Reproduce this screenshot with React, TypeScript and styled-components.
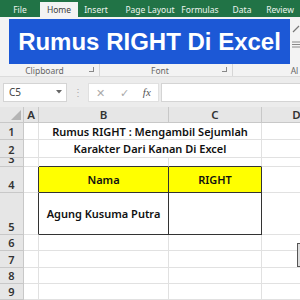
import React from "react";
import styled, { createGlobalStyle } from "styled-components";

const Global = createGlobalStyle`
  html, body { margin: 0; padding: 0; background: #fff; }
  body { width: 300px; height: 300px; overflow: hidden; font-family: "Noto Sans", "Open Sans", sans-serif; }
`;

const Page = styled.div`
  width: 300px;
  height: 300px;
  display: flex;
  flex-direction: column;
  overflow: hidden;
`;

const TabBar = styled.div`
  height: 17px;
  background: #217346;
  display: flex;
  align-items: flex-end;
  flex-shrink: 0;
`;

const Tab = styled.div<{ $active?: boolean; $w: number }>`
  width: ${(p) => p.$w}px;
  height: 15px;
  display: flex;
  align-items: center;
  justify-content: center;
  font-size: 8.5px;
  color: ${(p) => (p.$active ? "#3b3b3b" : "#eef5f0")};
  background: ${(p) => (p.$active ? "#f3f3f3" : "transparent")};
  white-space: nowrap;
  flex-shrink: 0;
`;

const Ribbon = styled.div`
  height: 59px;
  background: #f3f3f3;
  border-bottom: 1px solid #dcdcdc;
  display: flex;
  flex-direction: column;
  flex-shrink: 0;
`;

const RibbonBody = styled.div`
  height: 47px;
  display: flex;
  align-items: flex-start;
  padding: 2px 0 0 9px;
  box-sizing: border-box;
`;

const Banner = styled.div`
  width: 281px;
  height: 45px;
  background: #1c58d6;
  display: flex;
  align-items: center;
  justify-content: center;
  color: #fff;
  font-family: "Liberation Sans", Arial, sans-serif;
  font-weight: 700;
  font-size: 24px;
  flex-shrink: 0;
`;

const SideIcons = styled.div`
  display: flex;
  flex-direction: column;
  gap: 8px;
  padding: 6px 0 0 2px;
`;

const GroupRow = styled.div`
  height: 12px;
  display: flex;
  font-size: 8.5px;
  color: #666;
`;

const Group = styled.div<{ $w: number; $sep?: boolean }>`
  width: ${(p) => p.$w}px;
  position: relative;
  display: flex;
  align-items: center;
  justify-content: center;
  flex-shrink: 0;
  border-right: ${(p) => (p.$sep ? "1px solid #d6d6d6" : "none")};
  box-sizing: border-box;
`;

const GroupLabel = styled.span<{ $shift: number }>`
  transform: translateX(${(p) => p.$shift}px);
  white-space: nowrap;
`;

const Launcher = styled.span`
  position: absolute;
  right: 5px;
  top: 3px;
  width: 5px;
  height: 5px;
  border: 1px solid #888;
  border-top: none;
  border-left: none;
  box-sizing: border-box;
`;

const FormulaArea = styled.div`
  height: 30px;
  background: #ececec;
  display: flex;
  align-items: center;
  padding: 0 0 0 3px;
  flex-shrink: 0;
`;

const NameBox = styled.div`
  width: 64px;
  height: 19px;
  background: #fff;
  border: 1px solid #d4d4d4;
  box-sizing: border-box;
  display: flex;
  align-items: center;
  justify-content: space-between;
  padding: 0 4px 0 5px;
  font-size: 10px;
  color: #444;
`;

const Dots = styled.div`
  width: 21px;
  text-align: center;
  color: #aaa;
  font-size: 10px;
`;

const FxBox = styled.div`
  width: 71px;
  height: 19px;
  background: #fff;
  border: 1px solid #e0e0e0;
  box-sizing: border-box;
  display: flex;
  align-items: center;
  justify-content: space-around;
  color: #aaa;
  font-size: 11px;
`;

const FxLabel = styled.span`
  color: #555;
  font-style: italic;
  font-family: "Liberation Serif", serif;
`;

const FormulaInput = styled.div`
  flex: 1;
  height: 19px;
  margin-left: 2px;
  background: #fff;
  border: 1px solid #d4d4d4;
  border-right: none;
  box-sizing: border-box;
`;

const Sheet = styled.div`
  display: grid;
  grid-template-columns: 24px 15px 130px 93px 70px;
  grid-template-rows: 16px 17px 18px 9px 26px 42px 16px 17px 16px 16px;
  font-family: "Noto Sans", "Open Sans", sans-serif;
  flex: 1;
  position: relative;
`;

const Corner = styled.div`
  background: #e6e6e6;
  border-right: 1px solid #c8c8c8;
  border-bottom: 1px solid #c8c8c8;
  position: relative;
  box-sizing: border-box;
  &::after {
    content: "";
    position: absolute;
    right: 2px;
    bottom: 2px;
    width: 0;
    height: 0;
    border-left: 10px solid transparent;
    border-bottom: 10px solid #b4b4b4;
  }
`;

const ColHead = styled.div`
  background: #e6e6e6;
  border-right: 1px solid #c8c8c8;
  border-bottom: 1px solid #c8c8c8;
  box-sizing: border-box;
  display: flex;
  align-items: center;
  justify-content: center;
  font-size: 11.5px;
  font-weight: 600;
  color: #333;
`;

const RowHead = styled.div`
  background: #e6e6e6;
  border-right: 1px solid #c8c8c8;
  border-bottom: 1px solid #c8c8c8;
  box-sizing: border-box;
  display: flex;
  align-items: flex-end;
  justify-content: center;
  font-size: 11px;
  font-weight: 600;
  color: #333;
  line-height: 1;
  padding-bottom: 2px;
  overflow: hidden;
`;

const Cell = styled.div<{ $span?: number; $bg?: string; $box?: string }>`
  grid-column: span ${(p) => p.$span || 1};
  background: ${(p) => p.$bg || "#fff"};
  border-right: 1px solid #e1e1e1;
  border-bottom: 1px solid #e1e1e1;
  box-sizing: border-box;
  display: flex;
  align-items: center;
  justify-content: center;
  font-size: 11px;
  font-weight: 600;
  color: #111;
  white-space: nowrap;
  ${(p) => p.$box || ""}
`;

const Handle = styled.div`
  position: absolute;
  left: 297px;
  top: 136px;
  width: 4px;
  height: 22px;
  border: 1px solid #555;
  background: #ddd;
`;

const dark = "border-right: 1px solid #333; border-bottom: 1px solid #333;";

const rows = [
  { n: "1", cells: [<Cell key="a" />, <Cell key="bc" $span={2}>Rumus RIGHT : Mengambil Sejumlah</Cell>, <Cell key="d" />] },
  { n: "2", cells: [<Cell key="a" />, <Cell key="bc" $span={2}>Karakter Dari Kanan Di Excel</Cell>, <Cell key="d" />] },
  { n: "3", cells: [<Cell key="a" />, <Cell key="b" $box="border-bottom: 1px solid #333;" />, <Cell key="c" $box="border-bottom: 1px solid #333;" />, <Cell key="d" />] },
  {
    n: "4",
    cells: [
      <Cell key="a" $box="border-right: 1px solid #333;" />,
      <Cell key="b" $bg="#ffff00" $box={dark}>Nama</Cell>,
      <Cell key="c" $bg="#ffff00" $box={dark}>RIGHT</Cell>,
      <Cell key="d" />,
    ],
  },
  {
    n: "5",
    cells: [
      <Cell key="a" $box="border-right: 1px solid #333;" />,
      <Cell key="b" $box={dark}>Agung Kusuma Putra</Cell>,
      <Cell key="c" $box={dark} />,
      <Cell key="d" />,
    ],
  },
  { n: "6", cells: [<Cell key="a" />, <Cell key="b" />, <Cell key="c" />, <Cell key="d" />] },
  { n: "7", cells: [<Cell key="a" />, <Cell key="b" />, <Cell key="c" />, <Cell key="d" />] },
  { n: "8", cells: [<Cell key="a" />, <Cell key="b" />, <Cell key="c" />, <Cell key="d" />] },
  { n: "9", cells: [<Cell key="a" />, <Cell key="b" />, <Cell key="c" />, <Cell key="d" />] },
];

export default function App() {
  return (
    <>
      <Global />
      <Page>
        <TabBar>
          <Tab $w={40}>File</Tab>
          <Tab $w={38} $active>Home</Tab>
          <Tab $w={36}>Insert</Tab>
          <Tab $w={72}>Page Layout</Tab>
          <Tab $w={28}>Formulas</Tab>
          <Tab $w={56}>Data</Tab>
          <Tab $w={20}>Review</Tab>
        </TabBar>
        <Ribbon>
          <RibbonBody>
            <Banner>Rumus RIGHT Di Excel</Banner>
            <SideIcons>
              <svg width="8" height="8" viewBox="0 0 8 8">
                <path d="M1 7 L5 3 M5 3 L7 1" stroke="#777" strokeWidth="1.2" fill="none" />
              </svg>
              <svg width="8" height="8" viewBox="0 0 8 8">
                <path d="M0 1 H8 M0 3.5 H8 M0 6 H8" stroke="#888" strokeWidth="1" fill="none" />
              </svg>
            </SideIcons>
          </RibbonBody>
          <GroupRow>
            <Group $w={100} $sep>
              <GroupLabel $shift={-5}>Clipboard</GroupLabel>
              <Launcher />
            </Group>
            <Group $w={133} $sep>
              <GroupLabel $shift={-6}>Font</GroupLabel>
              <Launcher />
            </Group>
            <Group $w={67}>
              <GroupLabel $shift={28}>Al</GroupLabel>
            </Group>
          </GroupRow>
        </Ribbon>
        <FormulaArea>
          <NameBox>
            <span>C5</span>
            <svg width="6" height="4" viewBox="0 0 6 4">
              <path d="M0 0 H6 L3 3.5 Z" fill="#666" />
            </svg>
          </NameBox>
          <Dots>⋮</Dots>
          <FxBox>
            <span>✕</span>
            <span>✓</span>
            <FxLabel>fx</FxLabel>
          </FxBox>
          <FormulaInput />
        </FormulaArea>
        <Sheet>
          <Corner />
          <ColHead>A</ColHead>
          <ColHead>B</ColHead>
          <ColHead>C</ColHead>
          <ColHead>D</ColHead>
          {rows.map((r) => (
            <React.Fragment key={r.n}>
              <RowHead>{r.n}</RowHead>
              {r.cells}
            </React.Fragment>
          ))}
          <Handle />
        </Sheet>
      </Page>
    </>
  );
}
